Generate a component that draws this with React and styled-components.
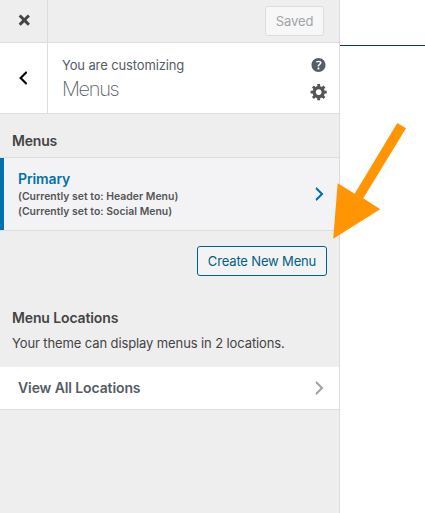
import React from "react";
import styled, { createGlobalStyle } from "styled-components";

const GlobalStyle = createGlobalStyle`
  * { box-sizing: border-box; }
  body { margin: 0; background: #fff; font-family: Inter, "Liberation Sans", sans-serif; overflow: hidden; }
  h2, h3, p { margin: 0; }
  button { font-family: inherit; margin: 0; padding: 0; cursor: pointer; }
`;

const Screen = styled.div`
  position: relative;
  display: flex;
  width: 425px;
  height: 513px;
  overflow: hidden;
`;

const Sidebar = styled.aside`
  width: 340px;
  height: 513px;
  background: #eee;
  border-right: 1px solid #dcdcde;
`;

const Preview = styled.main`
  flex: 1;
  height: 46px;
  border-bottom: 1px solid #023d57;
`;

const TopBar = styled.header`
  display: flex;
  align-items: center;
  justify-content: space-between;
  height: 43px;
  padding-right: 15px;
  border-bottom: 1px solid #ddd;
`;

const SideButton = styled.button`
  display: flex;
  justify-content: center;
  align-items: center;
  width: 48px;
  height: 100%;
  border: 0;
  border-right: 1px solid #ddd;
  background: transparent;
  color: ${(p) => p.$color};
`;

const Text = styled.span`
  display: block;
  white-space: nowrap;
  font-size: ${(p) => p.$size}px;
  font-weight: ${(p) => p.$weight || 400};
  line-height: ${(p) => p.$line}px;
  letter-spacing: ${(p) => p.$track || 0}px;
  color: ${(p) => p.$color || "#444"};
`;

const Button = styled.button`
  display: flex;
  align-items: center;
  justify-content: center;
  width: ${(p) => p.$width}px;
  height: 30px;
  border: 1px solid ${(p) => p.$border};
  border-radius: 3px;
  background: ${(p) => p.$fill};
`;

const PanelHeader = styled.div`
  display: flex;
  height: 71px;
  background: #fff;
  border-bottom: 1px solid #ddd;
`;

const Titles = styled.div`
  flex: 1;
  padding: 12px 0 0 14px;
`;

const Tools = styled.div`
  display: flex;
  flex-direction: column;
  gap: 7px;
  padding: 12px 11px 0 0;
`;

const SectionTitle = styled.div`
  height: 43px;
  padding: 17px 0 0 12px;
`;

const Row = styled.div`
  display: flex;
  align-items: center;
  justify-content: space-between;
  height: ${(p) => p.$height}px;
  padding: 0 10px 0 18px;
  background: ${(p) => (p.$active ? "#f3f3f5" : "#fff")};
  border-top: ${(p) => (p.$active ? "1px solid #ddd" : "0")};
  border-bottom: 1px solid #ddd;
  box-shadow: ${(p) => (p.$active ? "inset 4px 0 0 #0073aa" : "none")};
`;

const Actions = styled.div`
  display: flex;
  justify-content: flex-end;
  height: 77px;
  padding: 15px 12px 0 0;
`;

const Locations = styled.div`
  height: 59px;
  padding-left: 12px;
`;

const Icon = styled.svg`
  display: block;
  width: 20px;
  height: 20px;
  fill: ${(p) => p.$color || "currentColor"};
`;

const Arrow = styled.svg`
  position: absolute;
  left: 330px;
  top: 120px;
  width: 80px;
  height: 122px;
  fill: #ff9502;
`;

const paths = {
  close:
    "M12.12 10l3.53 3.53-2.12 2.12L10 12.12l-3.54 3.54-2.12-2.12L7.88 10 4.34 6.46l2.12-2.12L10 7.88l3.54-3.53 2.12 2.12z",
  back: "M14 5l-5 5 5 5-1 2-7-7 7-7z",
  next: "M6 15l5-5-5-5 1-2 7 7-7 7z",
  help: "M17 10c0-3.87-3.14-7-7-7-3.87 0-7 3.13-7 7s3.13 7 7 7c3.86 0 7-3.13 7-7zm-6.3 1.48H9.14v-.43c0-.38.08-.7.24-.98s.46-.57.88-.89c.41-.29.68-.53.81-.71.14-.18.2-.39.2-.62 0-.25-.09-.44-.28-.58-.19-.13-.45-.19-.79-.19-.58 0-1.25.19-2 .57l-.64-1.28c.87-.49 1.8-.74 2.77-.74.81 0 1.45.2 1.92.58.48.39.71.91.71 1.55 0 .43-.09.8-.29 1.11-.19.32-.57.67-1.11 1.06-.38.28-.61.49-.71.63-.1.15-.15.34-.15.57v.35zm-1.47 2.74c-.18-.17-.27-.42-.27-.73 0-.33.08-.58.26-.75s.43-.25.77-.25c.32 0 .57.09.75.26s.27.42.27.74c0 .3-.09.55-.27.72-.18.18-.43.27-.75.27-.33 0-.58-.09-.76-.26z",
  gear: "M18 12h-2.18c-.17.7-.44 1.35-.81 1.93l1.54 1.54-2.1 2.1-1.54-1.54c-.58.36-1.23.63-1.91.79V19H8v-2.18c-.68-.16-1.33-.43-1.91-.79l-1.54 1.54-2.12-2.12 1.54-1.54c-.36-.58-.63-1.23-.79-1.91H1V9.03h2.17c.16-.7.44-1.35.8-1.94L2.43 5.55l2.1-2.1 1.54 1.54c.58-.37 1.24-.64 1.93-.81V2h3v2.18c.68.16 1.33.43 1.91.79l1.54-1.54 2.12 2.12-1.54 1.54c.36.59.64 1.24.8 1.94H18V12zm-8.5 1.5c1.66 0 3-1.34 3-3s-1.34-3-3-3-3 1.34-3 3 1.34 3 3 3z",
};

function Glyph({ name, color, box = "0 0 20 20" }) {
  return (
    <Icon viewBox={box} $color={color} aria-hidden="true">
      <path d={paths[name]} />
    </Icon>
  );
}

export default function App() {
  return (
    <>
      <GlobalStyle />
      <Screen>
        <Sidebar>
          <TopBar>
            <SideButton $color="#444" aria-label="Close">
              <Glyph name="close" box="-0.3 0.9 20 20" />
            </SideButton>
            <Button $width={59} $border="#ddd" $fill="#f7f7f7">
              <Text $size={13} $line={28} $track={-0.1} $color="#a0a5aa">Saved</Text>
            </Button>
          </TopBar>
          <PanelHeader>
            <SideButton $color="#000" aria-label="Back">
              <Glyph name="back" box="0.9 0 20 20" />
            </SideButton>
            <Titles>
              <Text $size={13} $line={20} $track={-0.13} $color="#555d66">You are customizing</Text>
              <Text as="h2" $size={20} $weight={200} $line={28} $track={-1.35} $color="#555d66">Menus</Text>
            </Titles>
            <Tools>
              <Glyph name="help" color="#555d66" box="-0.5 0 20 20" />
              <Glyph name="gear" color="#555" box="-1.7 -0.2 21 21" />
            </Tools>
          </PanelHeader>
          <SectionTitle>
            <Text as="h3" $size={14} $weight={600} $line={20} $track={-0.2}>Menus</Text>
          </SectionTitle>
          <Row $active $height={74}>
            <div>
              <Text as="h3" $size={14} $weight={600} $line={20} $track={-0.12} $color="#0073aa">Primary</Text>
              <Text $size={10.4} $weight={600} $line={15} $track={0.03} $color="#555">(Currently set to: Header Menu)</Text>
              <Text $size={10.4} $weight={600} $line={15} $track={0.03} $color="#555">(Currently set to: Social Menu)</Text>
            </div>
            <Glyph name="next" color="#0073aa" box="-0.5 0 20 20" />
          </Row>
          <Actions>
            <Button $width={130} $border="#016087" $fill="#f3f3f3">
              <Text $size={13} $line={28} $track={-0.16} $color="#016087">Create New Menu</Text>
            </Button>
          </Actions>
          <Locations>
            <Text as="h3" $size={14} $weight={600} $line={20} $track={-0.13}>Menu Locations</Text>
            <Text as="p" $size={13} $line={30} $track={-0.11}>Your theme can display menus in 2 locations.</Text>
          </Locations>
          <Row $height={43}>
            <Text as="h3" $size={14} $weight={600} $line={20} $track={-0.11} $color="#555d66">View All Locations</Text>
            <Glyph name="next" color="#a0a5aa" box="-0.5 0 20 20" />
          </Row>
        </Sidebar>
        <Preview />
        <Arrow viewBox="330 120 80 122" aria-hidden="true">
          <path d="M333.2 238.8L337.7 183.3L354.7 193.7L397.3 123L406 128.3L363.3 198.3L380.2 209.3Z" />
        </Arrow>
      </Screen>
    </>
  );
}
